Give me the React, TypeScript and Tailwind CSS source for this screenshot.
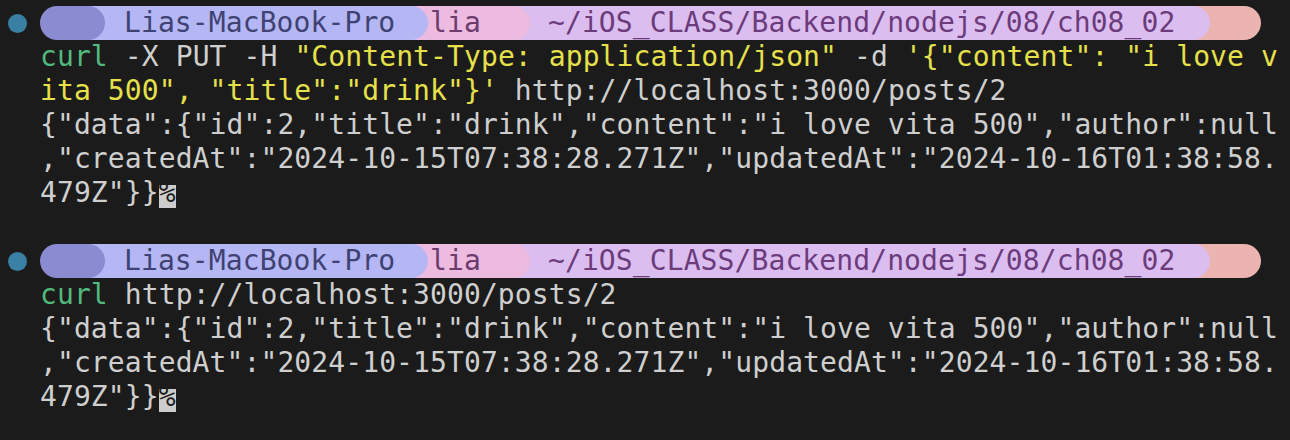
import React from 'react';

const mono = "font-['DejaVu_Sans_Mono','Liberation_Mono',monospace]";

const Prompt: React.FC = () => (
  <div className="flex h-[34px] items-center">
    <div className="ml-[8px] mr-[13px] h-[19px] w-[19px] flex-none rounded-full bg-[#3a7fa4]" />
    <div className="flex h-[34px] items-stretch">
      <div className="relative z-50 w-[65px] flex-none rounded-full bg-[#8b8bd1]" />
      <div className="relative z-40 -ml-[33px] w-[356px] flex-none rounded-r-full bg-[#b5b7f4] pl-[52px] text-[#3f4272]">
        Lias-MacBook-Pro
      </div>
      <div className="relative z-30 -ml-[17px] w-[119px] flex-none rounded-r-full bg-[#ecbbdf] pl-[19px] text-[#6d3b6e]">
        lia
      </div>
      <div className="relative z-20 -ml-[17px] w-[697px] flex-none rounded-r-full bg-[#dcbdef] pl-[35px] text-[#6b3b7c]">
        ~/iOS_CLASS/Backend/nodejs/08/ch08_02
      </div>
      <div className="relative z-10 -ml-[17px] w-[68px] flex-none rounded-r-full bg-[#ebb4b0]" />
    </div>
  </div>
);

const Row: React.FC<{ children?: React.ReactNode }> = ({ children }) => (
  <div className="h-[34px] pl-[40px]">{children}</div>
);

const Output: React.FC = () => (
  <>
    <Row>{'{"data":{"id":2,"title":"drink","content":"i love vita 500","author":null'}</Row>
    <Row>{',"createdAt":"2024-10-15T07:38:28.271Z","updatedAt":"2024-10-16T01:38:58.'}</Row>
    <Row>
      {'479Z"}}'}
      <span className="mt-[9px] inline-block h-[23px] w-[17px] bg-[#cdcdcd] align-top leading-[16px] text-[#1b1b1b]">%</span>
    </Row>
  </>
);

export default function App() {
  return (
    <div className={`${mono} h-[440px] w-[1290px] overflow-hidden whitespace-pre bg-[#1b1b1b] pt-[6px] text-[28px] leading-[34px] tracking-[0.1px] text-[#cfcfcf]`}>
      <Prompt />
      <Row>
        <span className="text-[#52b97c]">curl</span>
        {' -X PUT -H '}
        <span className="text-[#e6e04b]">"Content-Type: application/json"</span>
        {' -d '}
        <span className="text-[#e6e04b]">{`'{"content": "i love v`}</span>
      </Row>
      <Row>
        <span className="text-[#e6e04b]">{`ita 500", "title":"drink"}'`}</span>
        {' http://localhost:3000/posts/2'}
      </Row>
      <Output />
      <Row />
      <Prompt />
      <Row>
        <span className="text-[#52b97c]">curl</span>
        {' http://localhost:3000/posts/2'}
      </Row>
      <Output />
    </div>
  );
}
